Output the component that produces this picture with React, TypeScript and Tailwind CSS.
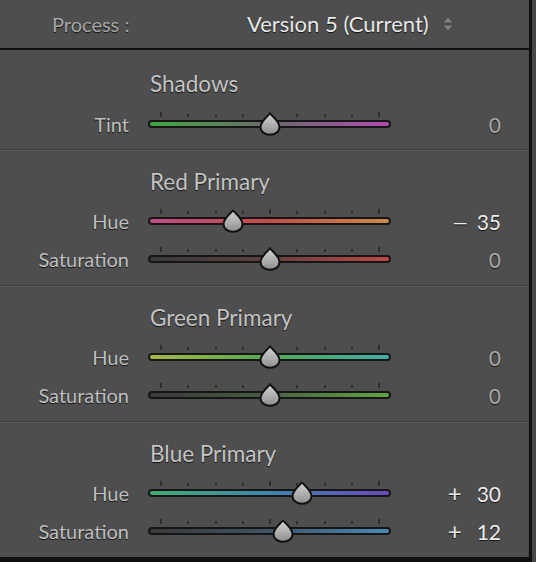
import React from "react";

type Row = { label: string; value: number; grad: string };
type Section = { title: string; rows: Row[] };

const TICKS = [13, 40.25, 67.5, 94.75, 122, 149.25, 176.5, 203.75, 231];

function Thumb() {
  return (
    <svg width="24" height="24" viewBox="0 0 24 24">
      <defs>
        <linearGradient id="tg" x1="0" y1="0" x2="0" y2="1">
          <stop offset="0" stopColor="#d4d4d4" />
          <stop offset="1" stopColor="#8e8e8e" />
        </linearGradient>
      </defs>
      <path
        d="M12 1.5 C13.5 3.5 21.5 9.5 21.5 15 C21.5 19.8 17.2 22.7 12 22.7 C6.8 22.7 2.5 19.8 2.5 15 C2.5 9.5 10.5 3.5 12 1.5 Z"
        fill="url(#tg)"
        stroke="#111"
        strokeWidth="2"
        strokeLinejoin="round"
      />
    </svg>
  );
}

function Slider({ value, grad }: { value: number; grad: string }) {
  const center = 122 + value * 1.07;
  return (
    <div className="relative h-[24px] w-[243px] shrink-0">
      {TICKS.map((t, i) => {
        const tall = i === 0 || i === 4 || i === 8;
        return (
          <div
            key={i}
            className={
              tall
                ? "absolute top-[0px] h-[5px] w-[2px] bg-[#2e2e2e]"
                : "absolute top-[2px] h-[3px] w-[2px] bg-[#2e2e2e]"
            }
            style={{ left: t - 1 }}
          />
        );
      })}
      <div
        className="absolute left-0 right-0 top-[8px] h-[8px] rounded-full border-2 border-[#161616]"
        style={{ background: grad }}
      />
      <div className="absolute top-[0px]" style={{ left: center - 12 }}>
        <Thumb />
      </div>
    </div>
  );
}

const shadow = "[text-shadow:0_1px_1px_rgba(0,0,0,0.75)]";

function SliderRow({ row }: { row: Row }) {
  const v = row.value;
  return (
    <div className="flex h-[38px] items-center">
      <div className={`w-[130px] pr-[1px] text-right text-[20px] text-[#bfbfbf] ${shadow}`}>{row.label}</div>
      <div className="ml-[18px]">
        <Slider value={v} grad={row.grad} />
      </div>
      <div
        className={`flex w-[110px] items-baseline justify-end text-[21px] ${shadow} ${
          v === 0 ? "text-[#a9a9a9]" : "text-[#ececec]"
        }`}
      >
        {v < 0 && <span className="mr-[10px] scale-x-150">{"\u2013"}</span>}
        {v > 0 && <span className="mr-[15px] text-[24px]">+</span>}
        <span>{Math.abs(v)}</span>
      </div>
    </div>
  );
}

const sections: Section[] = [
  {
    title: "Red Primary",
    rows: [
      { label: "Hue", value: -35, grad: "linear-gradient(90deg,#c24a86,#c74a4a 50%,#c98a4a)" },
      { label: "Saturation", value: 0, grad: "linear-gradient(90deg,#3a3a3a,#5a3f3f 45%,#c24646)" },
    ],
  },
  {
    title: "Green Primary",
    rows: [
      { label: "Hue", value: 0, grad: "linear-gradient(90deg,#a8b840,#52a855 50%,#3fb0a8)" },
      { label: "Saturation", value: 0, grad: "linear-gradient(90deg,#3a3a3a,#465a42 45%,#62a544)" },
    ],
  },
  {
    title: "Blue Primary",
    rows: [
      { label: "Hue", value: 30, grad: "linear-gradient(90deg,#45aa72,#4085ad 50%,#6a48bd)" },
      { label: "Saturation", value: 12, grad: "linear-gradient(90deg,#3a3a3a,#3f5060 45%,#4a8ab8)" },
    ],
  },
];

function Heading({ children }: { children: React.ReactNode }) {
  return (
    <div className={`h-[24px] pl-[150px] text-[22.5px] leading-[24px] text-[#c4c4c4] ${shadow}`}>{children}</div>
  );
}

function Divider() {
  return (
    <div>
      <div className="h-[1px] bg-[#424242]" />
      <div className="h-[1px] bg-[#5a5a5a]" />
    </div>
  );
}

export default function App() {
  return (
    <div
      className="flex h-[562px] w-[536px] overflow-hidden bg-[#4b4b4b] leading-none"
      style={{ fontFamily: "Lato, 'Open Sans', sans-serif" }}
    >
      <div className="flex w-[529px] flex-col bg-[#4e4e4e]">
        <div className="flex h-[48px] shrink-0 items-center">
          <div className={`w-[247px] pl-[52px] text-[20px] text-[#a6a6a6] ${shadow}`}>Process :</div>
          <div className={`text-[22px] text-[#e8e8e8] ${shadow}`}>Version 5 (Current)</div>
          <svg className="ml-[14px]" width="10" height="16" viewBox="0 0 10 16">
            <path d="M5 1.5 L9 6.5 L1 6.5 Z" fill="#858585" />
            <path d="M5 14.5 L9 9.5 L1 9.5 Z" fill="#858585" />
          </svg>
        </div>
        <div className="h-[2px] shrink-0 bg-[#111]" />
        <div className="shrink-0 border-r border-[#454545] pt-[22px] pb-[6px]">
          <Heading>Shadows</Heading>
          <div className="mt-[9px]">
            <SliderRow row={{ label: "Tint", value: 0, grad: "linear-gradient(90deg,#43a843,#6a6a6a 50%,#b24ab6)" }} />
          </div>
        </div>
        {sections.map((s) => (
          <div key={s.title} className="shrink-0 border-r border-[#454545]">
            <Divider />
            <div className="pt-[19px] pb-[7px]">
              <Heading>{s.title}</Heading>
              <div className="mt-[8px]">
                {s.rows.map((r) => (
                  <SliderRow key={r.label} row={r} />
                ))}
              </div>
            </div>
          </div>
        ))}
        <div className="flex-1 bg-[#101010]" />
      </div>
      <div className="w-[3px] bg-[#111]" />
      <div className="flex-1 bg-[#474747]" />
    </div>
  );
}
